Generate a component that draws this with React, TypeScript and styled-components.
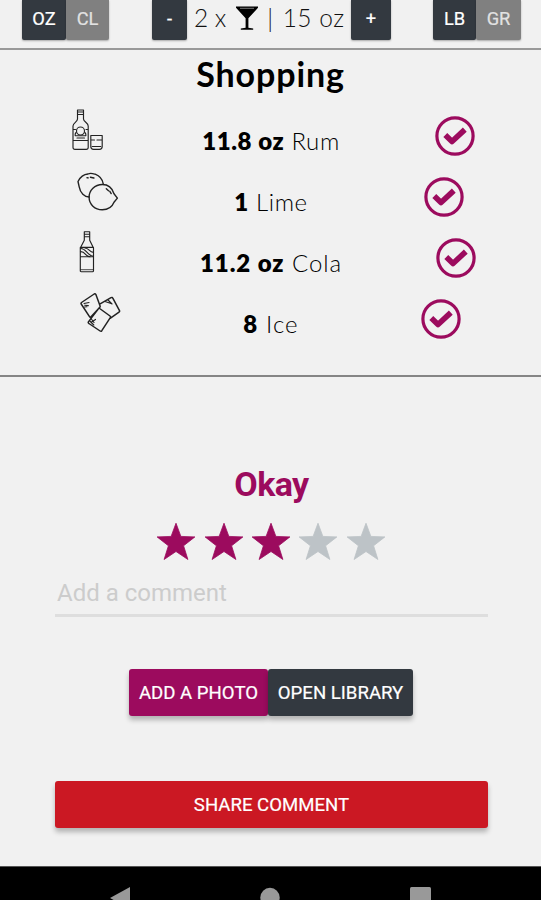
import React from "react";
import styled, { createGlobalStyle } from "styled-components";

const GlobalStyle = createGlobalStyle`
  * { box-sizing: border-box; }
  body { margin: 0; background: #f1f1f1; }
`;

const colors = { dark: "#333940", gray: "#808080", plum: "#9c0b5e", red: "#cb1823", muted: "#bdc3c7" };
const geometric = `"Century Gothic", Lato, "Open Sans", sans-serif`;

const Screen = styled.div`
  width: 541px;
  height: 900px;
  overflow: hidden;
  display: flex;
  flex-direction: column;
  background: #f1f1f1;
  color: #000;
  font-family: Roboto, sans-serif;
`;

const Toolbar = styled.header`
  display: flex;
  align-items: flex-start;
  height: 50px;
  padding: 0 20px 0 22px;
  border-bottom: 2px solid #999;
`;

const ButtonGroup = styled.div`
  display: flex;
`;

const UnitButton = styled.button<{ $width: number; $off?: boolean }>`
  width: ${(p) => p.$width}px;
  height: 40px;
  padding: 0 0 4px;
  border: 0;
  border-radius: 0 0 2px 2px;
  background: ${(p) => (p.$off ? colors.gray : colors.dark)};
  color: ${(p) => (p.$off ? "#e2e2e2" : "#fff")};
  font: 400 18.3px Roboto, sans-serif;
  -webkit-text-stroke: 0.2px currentColor;
  box-shadow: 0 1px 2px rgba(0, 0, 0, 0.3);
`;

const Servings = styled.div`
  display: flex;
  margin: 0 42px 0 43px;
`;

const ServingText = styled.div`
  display: flex;
  align-items: center;
  justify-content: space-between;
  width: 164px;
  height: 35px;
  padding: 0 7px;
  font: 300 24.5px ${geometric};
  color: #111;
  white-space: pre;
`;

const Amount = styled.span<{ $spacing: number }>`
  letter-spacing: ${(p) => p.$spacing}px;
  margin-right: ${(p) => -p.$spacing}px;
`;

const Shopping = styled.section`
  height: 327px;
  border-bottom: 2px solid #858585;
`;

const Title = styled.h1`
  margin: 0;
  height: 55px;
  padding-top: 4px;
  text-align: center;
  font: 700 34px/40px ${geometric};
  letter-spacing: 0.9px;
`;

const Row = styled.div`
  display: grid;
  grid-template-columns: 180px 182px 179px;
  height: 61px;
`;

const IconCell = styled.div<{ $left: number }>`
  padding: 3px 0 0 ${(p) => p.$left}px;
  svg { display: block; }
`;

const Ingredient = styled.div<{ $spacing: number }>`
  padding-top: 19px;
  text-align: center;
  white-space: nowrap;
  font: 300 24px/34px ${geometric};
  letter-spacing: ${(p) => p.$spacing}px;
  b { font-weight: 800; }
`;

const CheckCell = styled.div<{ $left: number }>`
  padding: 11px 0 0 ${(p) => p.$left}px;
  svg { display: block; }
`;

const Review = styled.section`
  height: 489px;
  padding: 86px 53px 0 55px;
  display: flex;
  flex-direction: column;
  align-items: center;
`;

const Verdict = styled.h2`
  margin: 0;
  color: ${colors.plum};
  font: 700 34px/42px Roboto, sans-serif;
  letter-spacing: -0.6px;
`;

const Stars = styled.div`
  display: flex;
  gap: 7.4px;
  margin: 17px 1px 0 0;
  height: 40px;
`;

const Comment = styled.input`
  width: 100%;
  height: 49px;
  margin-top: 6px;
  padding: 3px 2px 0;
  border: 0;
  border-bottom: 3px solid #dedede;
  background: transparent;
  font: 400 24px Roboto, sans-serif;
  &::placeholder { color: #cccccc; opacity: 1; }
`;

const PhotoButtons = styled.div`
  display: flex;
  margin: 52px 1px 0 0;
`;

const ActionButton = styled.button<{ $width: number; $color: string }>`
  width: ${(p) => p.$width}px;
  height: 47px;
  padding: 0;
  border: 0;
  border-radius: 3px;
  background: ${(p) => p.$color};
  color: #fff;
  font: 400 18.6px Roboto, sans-serif;
  -webkit-text-stroke: 0.2px currentColor;
  white-space: nowrap;
  box-shadow: 0 4px 5px rgba(0, 0, 0, 0.26);
`;

const ShareButton = styled(ActionButton)`
  margin-top: 65px;
`;

const SystemNav = styled.nav`
  height: 34px;
  background: #000;
  border-top: 1px solid #555;
  padding: 20px 110px 0 110px;
  display: flex;
  justify-content: space-between;
  overflow: hidden;
  svg { flex: none; fill: #999; }
`;

const Glass = () => (
  <svg width="22" height="24" viewBox="0 0 22 24">
    <path d="M0 .5h22v1.3l-9.6 10.5v9.4l4.8.8v1.2H4.8v-1.2l4.8-.8v-9.4L0 1.8z" fill="#000" />
    <path d="M4 2.3h14" stroke="#777" strokeWidth="1" />
  </svg>
);

const lineProps = { fill: "none", stroke: "#222", strokeWidth: 1.15, strokeLinejoin: "round" as const, strokeLinecap: "round" as const };

const RumIcon = () => (
  <svg width="34" height="44" viewBox="0 0 34 44" {...lineProps}>
    <path d="M5.5 2h6v9c0 3 4.7 3.7 4.7 7v21.5q0 1.8-2 1.8H3q-2 0-2-1.8V18c0-3.3 4.5-4 4.5-7zM5.5 4h6M5.5 6.5h6M1.5 21.5h2M14 21.5h2M1.5 32.5h14.5" />
    <circle cx="8.5" cy="23" r="4" />
    <path d="M4 24.5c-1 1-1 2.2-.8 3.2h10.7c.2-1.3-.2-2.3-1-3.2M5 30h7.5M18.8 27.5h11.4v11q0 2.8-2.8 2.8h-5.8q-2.8 0-2.8-2.8zM19 32h3.5M25 32h5M20.3 38.5h8.4" />
  </svg>
);

const LimeIcon = () => (
  <svg width="42" height="42" viewBox="0 0 42 42" {...lineProps}>
    <path d="M12.2 28C7.5 28 3.3 24 2.2 17.8L1 12.5C3 8.5 6 5.3 11 5c2.4-1.3 4.7-.5 7.2.2C23 7 25.5 10.5 26.3 15M10 8.7l1.2.2M13.4 8.2l3.5.8" strokeWidth="1.4" />
    <path d="M25.4 15.5c-7.6 0-13.3 5.7-13.3 12.8 0 7 5.7 12.5 13.2 12.5 6 0 9.8-2.8 11.7-7.5l3.4-4.2-3.4-4.4c-1.8-5.7-6-9.2-11.6-9.2zM29.3 19.7l2.2 2M32.8 22.3l1.4 2.3" strokeWidth="1.4" />
  </svg>
);

const ColaIcon = () => (
  <svg width="16" height="44" viewBox="0 0 16 44" {...lineProps}>
    <path d="M5.3 1.7h5.4v8.5L14.5 18v22.7q0 1-1 1H2.3q-1 0-1-1V18l4-7.8zM5.3 4.2h5.4M5.3 6.7h5.4M1.3 17.4h13.2M1.3 26.7h13.2" />
    <path d="M1.5 18.5c5.5-.7 6.5 7.5 13 7.8M1.5 21.7c5.5-.3 4 4.7 9.5 5M6 18c4.5.3 4 4.3 8.5 4.3" />
    <path d="M1.5 39.7h13" strokeWidth=".8" />
  </svg>
);

const IceIcon = () => (
  <svg width="42" height="44" viewBox="0 0 42 44" {...lineProps}>
    <path d="M1.5 11.5 14.2 3q1-.6 1.6.3l4.3 11.6q.3 1-.5 1.5L10.8 26q-.8.5-1.3-.3L1.2 13q-.5-.8.3-1.5zM19.7 13.2 31 6.7q1.3-.7 1.8.4l6.7 12.5q.4 1-.5 1.5l-8.5 6M19 17l11 8q1 .7.3 1.7l-8.5 13q-.7 1-1.7.3L8.9 32.5q-1-.6-.5-1.6z" strokeWidth="1.5" />
    <path d="m4 12.5 5-1M4.8 14.2l3.5.4M28 9l4 4M25 10.5l6 2M11 27.5l3 4M9.8 30l4 4M15.5 28.4l-4 2.7M4.5 16l2.3-.3" />
  </svg>
);

const CheckIcon = () => (
  <svg width="40" height="40" viewBox="0 0 40 40" fill="none" stroke={colors.plum}>
    <circle cx="20" cy="20" r="18.1" strokeWidth="3.2" />
    <path d="m10.3 19 6.7 6.5L29.8 13.6" strokeWidth="5.6" strokeLinejoin="round" />
  </svg>
);

const Star = ({ on }: { on: boolean }) => (
  <svg width="40" height="40" viewBox="0 0 40 40" fill={on ? colors.plum : colors.muted} stroke={on ? colors.plum : colors.muted} strokeWidth="0.8" strokeLinejoin="round">
    <path d="m20 1.2 4.9 13.2 14 .5-11.3 8.9 4.3 13.7L20 29.5 8.1 37.5l4.3-13.7L1.1 14.9l14-.5z" />
  </svg>
);

const items = [
  { Icon: RumIcon, left: 72, qty: "11.8 oz", name: "Rum", check: 73, spacing: 0.6 },
  { Icon: LimeIcon, left: 77, qty: "1", name: "Lime", check: 62, spacing: 0.6 },
  { Icon: ColaIcon, left: 79, qty: "11.2 oz", name: "Cola", check: 74, spacing: 0.95 },
  { Icon: IceIcon, left: 80, qty: "8", name: "Ice", check: 59, spacing: 1.1 },
];

export default function App() {
  return (
    <Screen>
      <GlobalStyle />
      <Toolbar>
        <ButtonGroup>
          <UnitButton $width={44}>OZ</UnitButton>
          <UnitButton $width={43} $off>CL</UnitButton>
        </ButtonGroup>
        <Servings>
          <UnitButton $width={35}>-</UnitButton>
          <ServingText>
            <Amount $spacing={0}>2 x</Amount>
            <Glass />
            <span>|</span>
            <Amount $spacing={0.5}>15 oz</Amount>
          </ServingText>
          <UnitButton $width={40}>+</UnitButton>
        </Servings>
        <ButtonGroup>
          <UnitButton $width={43}>LB</UnitButton>
          <UnitButton $width={45} $off>GR</UnitButton>
        </ButtonGroup>
      </Toolbar>
      <Shopping>
        <Title>Shopping</Title>
        {items.map(({ Icon, left, qty, name, check, spacing }) => (
          <Row key={name}>
            <IconCell $left={left}><Icon /></IconCell>
            <Ingredient $spacing={spacing}><b>{qty}</b> {name}</Ingredient>
            <CheckCell $left={check}><CheckIcon /></CheckCell>
          </Row>
        ))}
      </Shopping>
      <Review>
        <Verdict>Okay</Verdict>
        <Stars>{[1, 2, 3, 4, 5].map((n) => <Star key={n} on={n <= 3} />)}</Stars>
        <Comment placeholder="Add a comment" />
        <PhotoButtons>
          <ActionButton $width={139} $color={colors.plum}>ADD A PHOTO</ActionButton>
          <ActionButton $width={145} $color={colors.dark}>OPEN LIBRARY</ActionButton>
        </PhotoButtons>
        <ShareButton $width={433} $color={colors.red}>SHARE COMMENT</ShareButton>
      </Review>
      <SystemNav>
        <svg width="20" height="22"><path d="M0 11 20 0v22z" /></svg>
        <svg width="20" height="20"><circle cx="10" cy="10.5" r="9.7" /></svg>
        <svg width="21" height="21"><rect width="21" height="21" rx="1.5" /></svg>
      </SystemNav>
    </Screen>
  );
}
